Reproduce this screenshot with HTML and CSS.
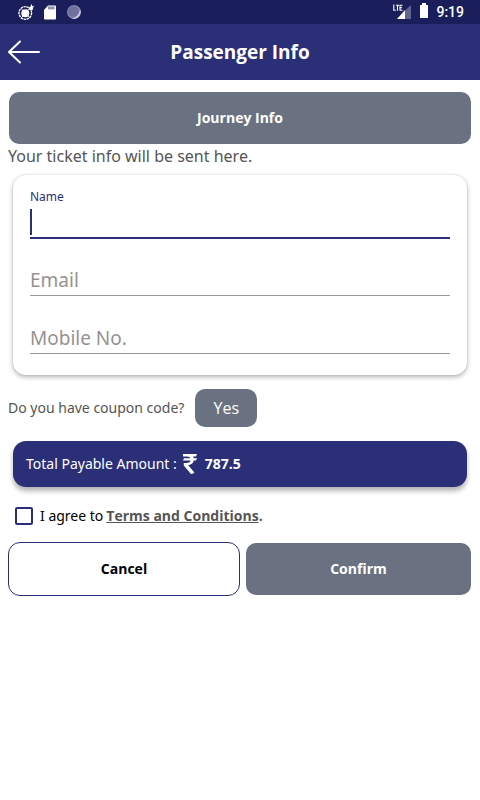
FILE: index.html
```html
<!DOCTYPE html>
<html lang="en">
<head>
<meta charset="utf-8">
<meta name="viewport" content="width=device-width, initial-scale=1">
<title>Passenger Info</title>
<link rel="stylesheet" href="styles.css">
</head>
<body>
<div class="status">
  <div class="status-group">
    <svg width="16" height="16" viewBox="0 0 16 16" aria-hidden="true">
      <circle cx="7.3" cy="9" r="6.3" fill="none" stroke="#fff" stroke-width="1.3" stroke-dasharray="2.4 .6"/>
      <circle cx="7.3" cy="9.2" r="4" fill="#fff"/>
      <path d="M3.4 5.2l2 1.6M11 5.2L9 6.8M3.6 13.2l1.4-1.4M11 13.2l-1.4-1.4" stroke="#fff"/>
      <path d="M10.5 3.6l2-.8L13 .4l1 .2v1.6l1.8-.4v1.2l-1.1.8.5 1.4-1.6 1.4-2.4-1z" fill="#fff"/>
    </svg>
    <svg width="12" height="15" viewBox="0 0 12 15" aria-hidden="true">
      <path d="M4 .5h7q1 0 1 1v12q0 1-1 1H1q-1 0-1-1V5z" fill="#fff"/>
      <path d="M4 1.5h6.5v2.8H4z" fill="#82849f"/>
      <path d="M5.7 1.5v2.8M8.2 1.5v2.8" stroke="#c8c9d8" stroke-width=".6"/>
    </svg>
    <svg width="15" height="14" viewBox="0 0 15 14" aria-hidden="true">
      <circle cx="8" cy="7" r="7" fill="#8486ab"/>
      <path d="M14.2 4.500A7 7 0 0 1 6 13.700Q12.600 11.800 14.200 4.500z" fill="#d0d0de"/>
      <circle cx="7.4" cy="6.4" r="5.4" fill="#6e719e"/>
    </svg>
  </div>
  <div class="status-group status-right">
    <svg width="19" height="16" viewBox="0 0 19 16" aria-hidden="true">
      <path d="M18 1v14h-6V6.500z" fill="#61648f"/>
      <path d="M12 6v9H4z" fill="#fff"/>
      <path d="M.8 .5v5.700h2M3 1.200h3M4.500 1.200v5.500M9.500 1.200H7v5h2.500M7 3.600h2" fill="none" stroke="#fff" stroke-width="1.1"/>
    </svg>
    <svg width="8" height="18" viewBox="0 0 8 18" aria-hidden="true"><path d="M2 0h4v2h2v13H0V2h2z" fill="#fff"/></svg>
    <time>9:19</time>
  </div>
</div>
<header class="header">
  <button class="back" type="button" aria-label="Back">
    <svg width="32" height="24" viewBox="0 0 32 24" aria-hidden="true"><path d="M31 12H1M12 1.500L1 12l11 10.500" fill="none" stroke="#fff" stroke-width="2" stroke-linecap="round" stroke-linejoin="round"/></svg>
  </button>
  <h1>Passenger Info</h1>
</header>
<main>
  <button class="btn journey" type="button">Journey Info</button>
  <p class="note">Your ticket info will be sent here.</p>
  <form class="card">
    <div class="field active">
      <label for="name">Name</label>
      <input id="name" type="text">
      <span class="caret"></span>
    </div>
    <div class="field"><input type="email" placeholder="Email" aria-label="Email"></div>
    <div class="field"><input type="tel" placeholder="Mobile No." aria-label="Mobile No."></div>
  </form>
  <div class="coupon">
    <span>Do you have coupon code?</span>
    <button class="btn yes" type="button">Yes</button>
  </div>
  <div class="total">
    <span>Total Payable Amount :</span>
    <svg width="14" height="20" viewBox="0 0 14 20" role="img" aria-label="Rupees"><path d="M0 0h14l-1 2.400H9.800q.8.800 1 1.800H14l-1 2.400h-2.200q-.8 4-5.600 4.600l6.200 7.200L9.200 20H8L.8 11.600V9h3.400q3 0 3.600-2.400H0l1-2.400h6.600Q6.800 2.400 4.200 2.400H0z" fill="#fff"/></svg>
    <strong>787.5</strong>
  </div>
  <div class="agree">
    <input id="agree" type="checkbox">
    <label for="agree">I agree to</label>
    <span class="terms"><a href="#terms">Terms and Conditions</a>.</span>
  </div>
  <div class="actions">
    <button class="btn cancel" type="button">Cancel</button>
    <button class="btn confirm" type="button">Confirm</button>
  </div>
</main>
</body>
</html>
```
FILE: styles.css
```css
* { box-sizing: border-box; }

body {
  margin: 0;
  background: #fff;
  color: #555;
  font: 14px/20px "Noto Sans", "Open Sans", sans-serif;
}

button, input { font: inherit; }
svg { display: block; flex: none; }

.status {
  display: flex;
  justify-content: space-between;
  height: 24px;
  padding: 0 16px 0 18px;
  background: #1a1f5b;
  color: #fff;
}

.status-group { display: flex; align-items: center; gap: 10px; }
.status-right { gap: 8px; font: 500 14px/24px Roboto, sans-serif; }

.header {
  display: grid;
  grid-template-columns: 32px 1fr 32px;
  align-items: center;
  height: 56px;
  padding: 0 8px;
  background: #2b2f78;
  color: #fff;
}

.header h1 {
  margin: 0;
  font-size: 19px;
  line-height: 24px;
  text-align: center;
}

.back { padding: 0; border: 0; background: none; }

main { padding: 12px 8px; }

.btn {
  height: 52px;
  padding: 0;
  border: 0;
  border-radius: 10px;
  background: #6a7281;
  color: #fff;
  font-weight: 700;
}

.header h1, .btn, strong, .terms { font-family: "Open Sans", "Noto Sans", sans-serif; }

.journey { display: block; width: calc(100% - 2px); margin: 0 1px; }

.note { margin: 0; font-size: 16px; line-height: 24px; }

.card {
  display: grid;
  gap: 18px;
  margin: 7px 5px 0;
  padding: 12px 17px 21px;
  border-radius: 13px;
  background: #fff;
  box-shadow: 0 2px 5px rgba(0, 0, 0, .3), 0 0 2px rgba(0, 0, 0, .12);
}

.field { position: relative; }
.field label { display: block; color: #2b2f78; font-size: 12px; line-height: 20px; }

.field input {
  display: block;
  width: 100%;
  height: 40px;
  padding: 9px 0 0;
  border: 0;
  border-bottom: 1px solid #999;
  border-radius: 0;
  background: none;
  font-size: 19px;
  outline: 0;
}

.field input::placeholder { color: #969292; opacity: 1; }
.active { margin-bottom: -1px; }
.active input { height: 32px; padding: 0; border-bottom: 2px solid #2b2f78; }

.caret {
  position: absolute;
  left: 0;
  bottom: 4px;
  width: 2px;
  height: 26px;
  background: #2b2f78;
}

.coupon { display: flex; align-items: center; gap: 11px; margin-top: 14px; }
.yes { width: 62px; height: 38px; font-size: 16px; font-weight: 400; }

.total {
  display: flex;
  align-items: center;
  height: 46px;
  margin: 14px 5px 0;
  padding: 0 13px;
  border-radius: 13px;
  background: #2b2f78;
  color: #fff;
  box-shadow: 0 4px 5px rgba(0, 0, 0, .3);
}

.total svg { margin: 0 8px 0 6px; }

.agree { display: flex; align-items: center; margin: 19px 0 0 7px; }

.agree input {
  width: 18px;
  height: 18px;
  margin: 0 7px 0 0;
  border: 2px solid #2b2f78;
  border-radius: 2px;
  appearance: none;
}

.agree input:checked { background: #2b2f78; }
.agree label { color: #000; }
.terms { margin-left: 3px; font-weight: 700; }
.terms a { color: inherit; }

.actions {
  display: grid;
  grid-template-columns: 232fr 225fr;
  align-items: center;
  gap: 6px;
  margin: 16px 1px 0 0;
}

.cancel { height: 54px; border: 1px solid #2b2f78; border-radius: 12px; background: #fff; color: #000; }
```
